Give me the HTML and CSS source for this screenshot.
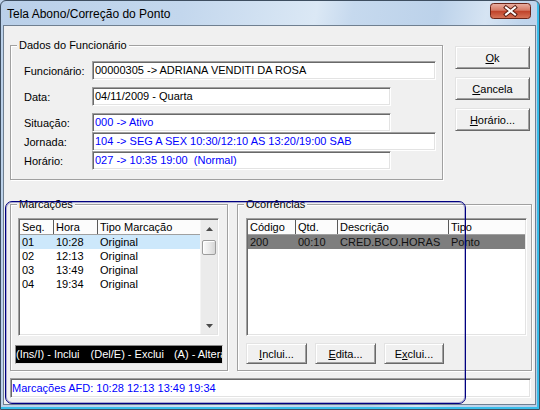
FILE: index.html
```html
<!DOCTYPE html>
<html lang="pt-BR">
<head>
<meta charset="utf-8">
<title>Tela Abono/Correção do Ponto</title>
<link rel="stylesheet" href="styles.css">
</head>
<body>
<div class="window">
  <div class="titlebar">
    <span class="title">Tela Abono/Correção do Ponto</span>
    <span class="close">
      <svg width="41" height="16" viewBox="0 0 41 16">
        <defs>
          <linearGradient id="cg" x1="0" y1="0" x2="0" y2="1">
            <stop offset="0" stop-color="#eab1a4"/>
            <stop offset="0.45" stop-color="#d67a65"/>
            <stop offset="0.52" stop-color="#c0432b"/>
            <stop offset="1" stop-color="#d8765a"/>
          </linearGradient>
        </defs>
        <rect x="0.5" y="0.5" width="40" height="15" rx="3" fill="url(#cg)" stroke="#6b2519"/>
        <path d="M16 4.5 L25 11.5 M25 4.5 L16 11.5" stroke="#5a1d12" stroke-width="4" stroke-linecap="square"/>
        <path d="M16 4.5 L25 11.5 M25 4.5 L16 11.5" stroke="#ffffff" stroke-width="2" stroke-linecap="square"/>
      </svg>
    </span>
  </div>
  <div class="client">
    <div class="top">
      <div class="group dados">
        <span class="legend">Dados do Funcionário</span>
        <div class="row gap"><span class="lbl">Funcionário:</span><div class="edit wide">00000305 -&gt; ADRIANA VENDITI DA ROSA</div></div>
        <div class="row gap"><span class="lbl">Data:</span><div class="edit">04/11/2009 - Quarta</div></div>
        <div class="row"><span class="lbl">Situação:</span><div class="edit blue">000 -&gt; Ativo</div></div>
        <div class="row"><span class="lbl">Jornada:</span><div class="edit wide blue">104 -&gt; SEG A SEX 10:30/12:10 AS 13:20/19:00 SAB</div></div>
        <div class="row"><span class="lbl">Horário:</span><div class="edit blue">027 -&gt; 10:35 19:00&nbsp; (Normal)</div></div>
      </div>
      <div class="buttons">
        <div class="btn big"><span><u>O</u>k</span></div>
        <div class="btn big"><span><u>C</u>ancela</span></div>
        <div class="btn big"><span><u>H</u>orário...</span></div>
      </div>
    </div>

    <div class="lower">
      <div class="group marc">
        <span class="legend">Marcações</span>
        <div class="list marc-list">
          <div class="list-main">
            <div class="grid marc-cols head">
              <div class="hc">Seq.</div><div class="hc">Hora</div><div class="hc">Tipo Marcação</div>
            </div>
            <div class="grid marc-cols rowi sel-blue">
              <div class="c">01</div><div class="c">10:28</div><div class="c">Original</div>
            </div>
            <div class="grid marc-cols rowi">
              <div class="c">02</div><div class="c">12:13</div><div class="c">Original</div>
            </div>
            <div class="grid marc-cols rowi">
              <div class="c">03</div><div class="c">13:49</div><div class="c">Original</div>
            </div>
            <div class="grid marc-cols rowi">
              <div class="c">04</div><div class="c">19:34</div><div class="c">Original</div>
            </div>
          </div>
          <div class="vscroll">
            <div class="sbtn"><svg width="7" height="4" viewBox="0 0 7 4"><path d="M0 4 L3.5 0 L7 4 Z" fill="#4a4a4a"/></svg></div>
            <div class="track"><div class="thumb"></div></div>
            <div class="sbtn"><svg width="7" height="4" viewBox="0 0 7 4"><path d="M0 0 L3.5 4 L7 0 Z" fill="#4a4a4a"/></svg></div>
          </div>
        </div>
        <div class="keybar"><span>(Ins/I) - Inclui</span><span class="k2">(Del/E) - Exclui</span><span class="k3">(A) - Altera</span></div>
      </div>

      <div class="group ocor">
        <span class="legend">Ocorrências</span>
        <div class="list ocor-list">
          <div class="list-main">
            <div class="grid ocor-cols head">
              <div class="hc">Código</div><div class="hc">Qtd.</div><div class="hc">Descrição</div><div class="hc">Tipo</div>
            </div>
            <div class="grid ocor-cols rowi sel-gray">
              <div class="c">200</div><div class="c">00:10</div><div class="c">CRED.BCO.HORAS</div><div class="c">Ponto</div>
            </div>
          </div>
        </div>
        <div class="obtns">
          <div class="btn small"><span><u>I</u>nclui...</span></div>
          <div class="btn small"><span><u>E</u>dita...</span></div>
          <div class="btn small w60"><span>E<u>x</u>clui...</span></div>
        </div>
      </div>
    </div>

    <div class="edit status blue">Marcações AFD: 10:28 12:13 13:49 19:34</div>

    <div class="overlay"></div>
  </div>
</div>
</body>
</html>
```

FILE: styles.css
```css
* { box-sizing: border-box; }
html, body { margin: 0; padding: 0; }
body {
  width: 540px;
  height: 410px;
  overflow: hidden;
  font-family: "Liberation Sans", Arial, sans-serif;
  font-size: 11px;
  color: #000;
  background: #bfd3ea;
}
.window {
  width: 540px;
  height: 410px;
  display: flex;
  flex-direction: column;
  border: 1px solid #3e4e60;
  border-radius: 6px 6px 0 0;
  padding: 0 3px 4px 2px;
  background:
    linear-gradient(100deg,
      #bad0e9 0%, #c3d7ed 30%, #dbe8f5 52%, #c6d9ee 58%,
      #bcd2ea 72%, #d6e4f3 80%, #c0d5ec 86%, #b9cfe8 100%);
  box-shadow: inset -2px -2px 0 #38bde9;
}
.titlebar {
  height: 24px;
  flex: none;
  display: flex;
  justify-content: space-between;
  align-items: flex-start;
}
.title {
  font-size: 12px;
  line-height: 15px;
  padding: 6px 0 0 4px;
  color: #000;
}
.close {
  margin: 2px 5px 0 0;
  width: 41px;
  height: 16px;
  display: block;
}
.close svg { display: block; }

.client {
  flex: 1;
  position: relative;
  background: #f0f0f0;
  border: 1px solid #6f7f90;
  padding-left: 6px;
  display: flex;
  flex-direction: column;
}

/* group boxes */
.group {
  position: relative;
  border: 1px solid #a0a0a0;
  box-shadow: inset 1px 1px 0 #fff, 1px 1px 0 #fff;
}
.legend {
  position: absolute;
  top: -7px;
  left: 6px;
  padding: 0 2px;
  line-height: 13px;
  background: #f0f0f0;
}

.top {
  display: flex;
  align-items: flex-start;
  margin-top: 19px;
}
.dados {
  width: 433px;
  height: 135px;
  padding: 15px 0 0 13px;
}
.row {
  display: flex;
  align-items: center;
  height: 19px;
}
.row.gap { margin-bottom: 7px; }
.lbl { width: 68px; }

.edit {
  height: 19px;
  width: 299px;
  background: #fff;
  border: 1px solid;
  border-color: #a0a0a0 #fff #fff #a0a0a0;
  box-shadow: inset 1px 1px 0 #696969, inset -1px -1px 0 #e3e3e3;
  padding: 0 0 0 2px;
  line-height: 17px;
  white-space: nowrap;
  overflow: hidden;
}
.edit.wide { width: 344px; }
.blue { color: #0000ff; }

.buttons {
  display: flex;
  flex-direction: column;
  gap: 8px;
  margin: 1px 0 0 12px;
}
.btn {
  display: flex;
  align-items: center;
  justify-content: center;
  background: #f0f0f0;
  border: 1px solid;
  border-color: #e3e3e3 #696969 #696969 #e3e3e3;
  box-shadow: inset 1px 1px 0 #fff, inset -1px -1px 0 #a0a0a0;
  white-space: nowrap;
}
.btn.big { width: 75px; height: 23px; }
.btn.small { width: 61px; height: 21px; }
.btn.w60 { width: 60px; }

/* lower area */
.lower {
  display: flex;
  gap: 9px;
  margin-top: 24px;
}
.marc {
  width: 218px;
  height: 167px;
  padding-top: 13px;
  display: flex;
  flex-direction: column;
  align-items: flex-start;
}
.ocor {
  width: 295px;
  height: 167px;
  padding: 13px 0 0 8px;
  display: flex;
  flex-direction: column;
  align-items: flex-start;
}

.list {
  height: 118px;
  background: #fff;
  border: 1px solid;
  border-color: #a0a0a0 #fff #fff #a0a0a0;
  box-shadow: inset 1px 1px 0 #696969, inset -1px -1px 0 #e3e3e3;
  padding: 1px;
  display: flex;
}
.marc-list { width: 201px; margin-left: 7px; }
.ocor-list { width: 281px; }
.list-main { flex: 1; overflow: hidden; }

.grid { display: grid; }
.marc-cols { grid-template-columns: 34px 44px 1fr; }
.ocor-cols { grid-template-columns: 48px 42px 111px 1fr; }

.head {
  height: 15px;
  background: #fcfcfc;
  border-bottom: 1px solid #a0a0a0;
}
.hc {
  padding-left: 2px;
  line-height: 14px;
  border-right: 1px solid #5a5a5a;
  white-space: nowrap;
  overflow: hidden;
}
.hc:last-child { border-right: none; }
.rowi { height: 14px; }
.c {
  padding-left: 2px;
  line-height: 14px;
  white-space: nowrap;
}
.sel-blue { background: #cde8fb; }
.sel-gray { background: #7e7e7e; color: #111; }

.vscroll {
  width: 17px;
  flex: none;
  display: flex;
  flex-direction: column;
  background: #ebebeb;
  border-left: 1px solid #f4f4f4;
}
.sbtn {
  height: 17px;
  flex: none;
  display: flex;
  align-items: center;
  justify-content: center;
}
.sbtn svg { display: block; }
.track { flex: 1; padding: 3px 0 0 1px; }
.thumb {
  width: 14px;
  height: 15px;
  border: 1px solid #9c9c9c;
  border-radius: 2px;
  background: linear-gradient(90deg, #fbfbfb 0%, #ececec 45%, #d6d6d6 100%);
  box-shadow: inset 1px 1px 0 #fff;
}

.keybar {
  margin: 9px 0 0 4px;
  width: 208px;
  height: 19px;
  background: #000;
  color: #fff;
  border: 1px solid;
  border-color: #8a8a8a #e3e3e3 #e3e3e3 #8a8a8a;
  line-height: 17px;
  white-space: nowrap;
  overflow: hidden;
  padding-left: 0;
}
.keybar .k2 { margin-left: 11px; }
.keybar .k3 { margin-left: 10px; }

.obtns {
  display: flex;
  gap: 8px;
  margin-top: 7px;
}

.status {
  width: 521px;
  height: 20px;
  margin-top: 7px;
  line-height: 18px;
  padding-left: 1px;
}

.overlay {
  position: absolute;
  left: 1px;
  top: 175px;
  width: 461px;
  height: 203px;
  border: 1px solid #000080;
  box-shadow: inset 0 0 0 1px rgba(40, 40, 150, 0.35);
  border-radius: 7px;
  pointer-events: none;
}
```
